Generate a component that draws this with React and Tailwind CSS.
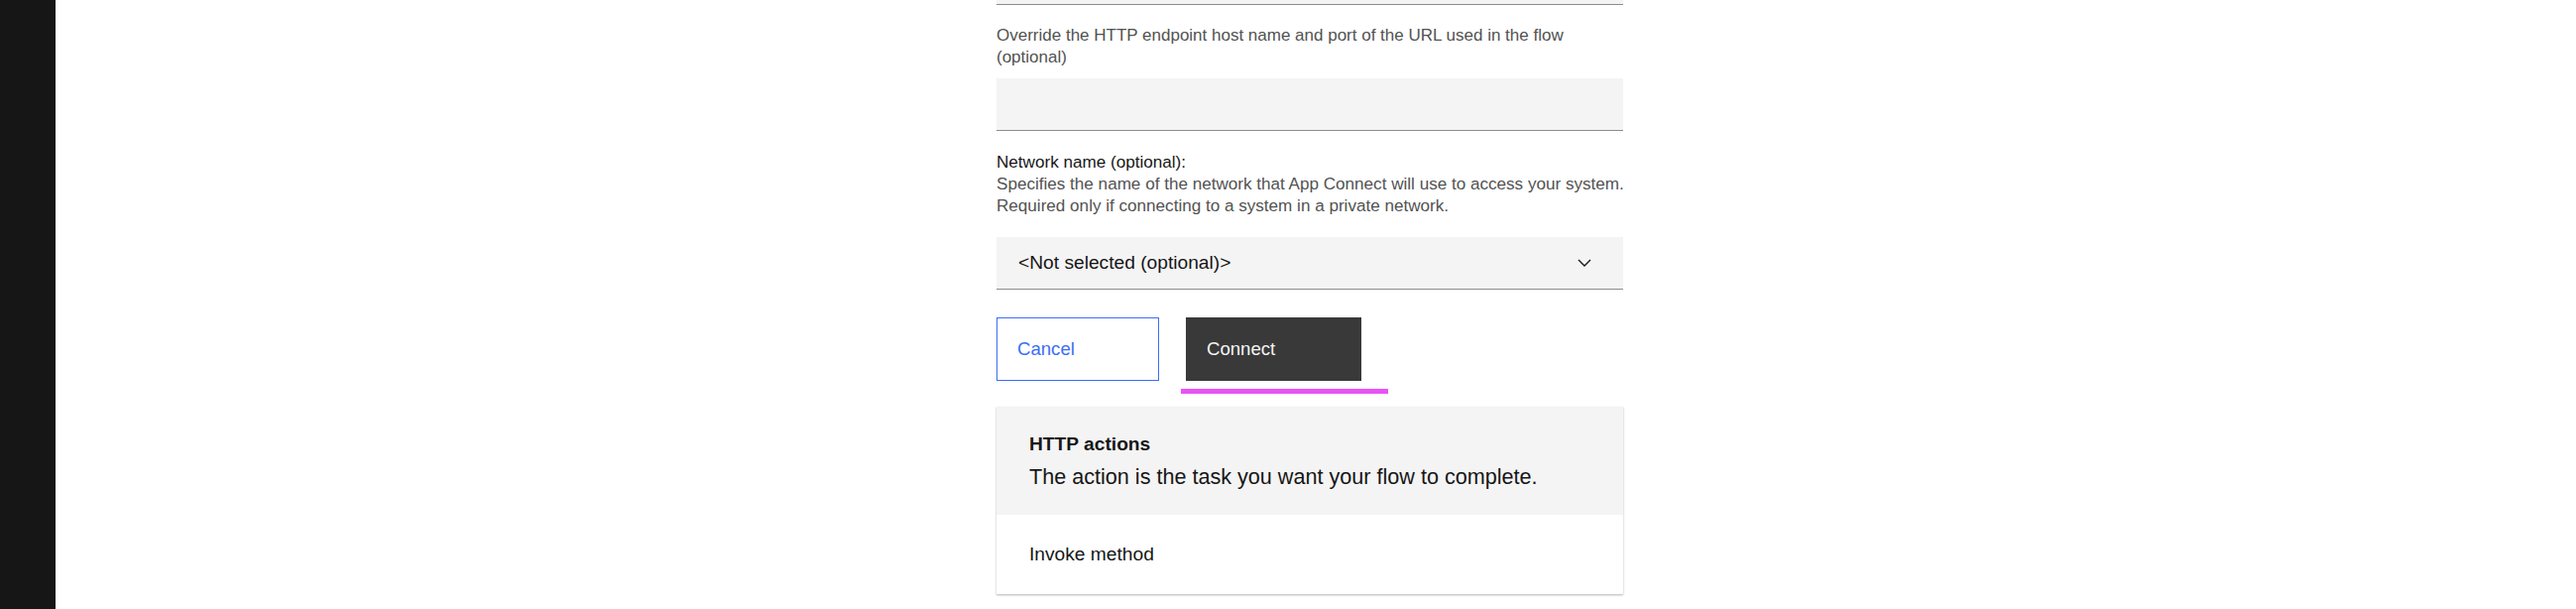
export default function App() {
  const font = { fontFamily: '"Liberation Sans", Arial, sans-serif' };
  return (
    <div className="flex h-[614px] w-[2598px] overflow-hidden bg-white" style={font}>
      <div className="w-[56px] shrink-0 bg-[#161616]" />
      <div className="flex-1 pl-[949px]">
        <div className="flex w-[632px] flex-col">
          <div className="h-[5px] border-b border-[#8d8d8d] bg-[#f4f4f4]" />
          <p className="mt-[20px] text-[17px] leading-[22px] text-[#525252]">
            Override the HTTP endpoint host name and port of the URL used in the flow (optional)
          </p>
          <div className="mt-[10px] h-[53px] border-b border-[#8d8d8d] bg-[#f4f4f4]" />
          <div className="mt-[21px] whitespace-nowrap text-[17.1px] leading-[22px]">
            <div className="text-[#161616]">Network name (optional):</div>
            <div className="text-[#525252]">
              Specifies the name of the network that App Connect will use to access your system.
            </div>
            <div className="text-[#525252]">
              Required only if connecting to a system in a private network.
            </div>
          </div>
          <div className="mt-[20px] flex h-[53px] items-center justify-between border-b border-[#8d8d8d] bg-[#f4f4f4] pl-[22px] pr-[32px]">
            <span className="text-[19.2px] text-[#161616]">&lt;Not selected (optional)&gt;</span>
            <svg width="14" height="8" viewBox="0 0 14 8" fill="none">
              <path d="M1 1l6 6 6-6" stroke="#161616" strokeWidth="1.4" />
            </svg>
          </div>
          <div className="mt-[28px] flex gap-[27px]">
            <button className="flex h-[64px] w-[164px] items-center border border-[#3b6ef5] bg-white pl-[20px] text-left text-[18.6px] text-[#3b6ef5]">
              Cancel
            </button>
            <div className="relative">
              <button className="flex h-[64px] w-[177px] items-center bg-[#393939] pl-[21px] text-left text-[18.6px] text-[#f4f4f4]">
                Connect
              </button>
              <div className="absolute left-[-5px] top-[72px] h-[5px] w-[209px] bg-[#ea52f7]" />
            </div>
          </div>
          <div className="mt-[26px] shadow-[0_1px_2px_rgba(0,0,0,0.3)]">
            <div className="flex h-[109px] flex-col bg-[#f4f4f4] px-[33px] pt-[24px] text-[#161616]">
              <div className="text-[19.2px] font-semibold leading-[27px]">HTTP actions</div>
              <div className="mt-[5px] text-[21.6px] leading-[30px]">The action is the task you want your flow to complete.</div>
            </div>
            <div className="flex h-[80px] items-center bg-white px-[33px] text-[19.2px] text-[#161616]">
              Invoke method
            </div>
          </div>
        </div>
      </div>
    </div>
  );
}
